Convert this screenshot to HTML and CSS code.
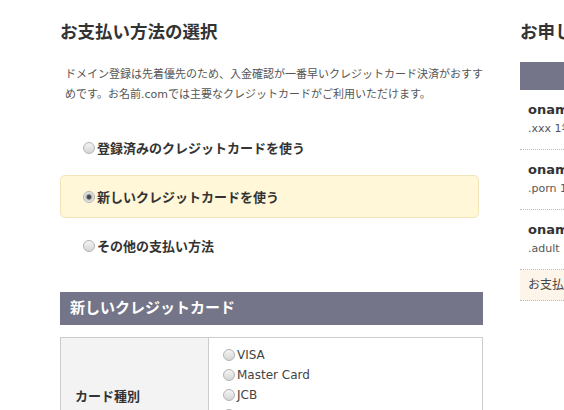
FILE: index.html
```html
<!DOCTYPE html>
<html lang="ja">
<head>
    <meta charset="UTF-8">
    <meta name="viewport" content="width=device-width, initial-scale=1.0">
    <title>お支払い方法の選択</title>
    <link rel="stylesheet" href="styles.css">
</head>
<body>

<div class="page">
    <div class="main">
        <h2 class="title">お支払い方法の選択</h2>
        <p class="lead">ドメイン登録は先着優先のため、入金確認が一番早いクレジットカード決済がおすすめです。お名前.comでは主要なクレジットカードがご利用いただけます。</p>

        <div class="methods">
            <label class="method"><input type="radio" name="pay">登録済みのクレジットカードを使う</label>
            <label class="method selected"><input type="radio" name="pay" checked>新しいクレジットカードを使う</label>
            <label class="method"><input type="radio" name="pay">その他の支払い方法</label>
        </div>

        <h3 class="section-head">新しいクレジットカード</h3>
        <table class="form-table">
            <tr>
                <th>カード種別</th>
                <td>
                    <label class="brand"><input type="radio" name="brand">VISA</label>
                    <label class="brand"><input type="radio" name="brand">Master Card</label>
                    <label class="brand"><input type="radio" name="brand">JCB</label>
                    <label class="brand"><input type="radio" name="brand">AMEX</label>
                    <label class="brand"><input type="radio" name="brand">Diners Club</label>
                </td>
            </tr>
        </table>
    </div>

    <div class="side">
        <h2 class="title">お申し込み内容</h2>
        <div class="side-bar"></div>
        <div class="item">
            <div class="item-name">onamae-sample.xxx</div>
            <div class="item-sub">.xxx 1年登録</div>
        </div>
        <div class="item">
            <div class="item-name">onamae-sample.porn</div>
            <div class="item-sub">.porn 1年登録</div>
        </div>
        <div class="item">
            <div class="item-name">onamae-sample.adult</div>
            <div class="item-sub">.adult 1年登録</div>
        </div>
        <div class="pay-row">お支払い金額</div>
    </div>
</div>

</body>
</html>
```

FILE: styles.css
```css
* {
    box-sizing: border-box;
}

body {
    margin: 0;
    background: #fff;
    color: #333;
    font-family: "DejaVu Sans", "Noto Sans CJK JP", sans-serif;
    overflow: hidden;
}

.page {
    display: flex;
    gap: 37px;
    padding: 20px 0 0 60px;
}

.main {
    flex: 0 0 423px;
    width: 423px;
    min-width: 0;
}

.side {
    flex: 0 0 260px;
    min-width: 0;
}

.title {
    margin: 0;
    font-size: 17.5px;
    line-height: 24px;
    font-weight: bold;
    color: #333;
}

.lead {
    margin: 21px 0 0;
    padding-left: 5px;
    font-size: 11px;
    line-height: 20px;
    color: #555;
}

.methods {
    margin-top: 21px;
    display: flex;
    flex-direction: column;
    gap: 6px;
}

.method {
    display: flex;
    align-items: center;
    height: 43px;
    width: 419px;
    padding-left: 22px;
    border: 1px solid transparent;
    border-radius: 5px;
    font-size: 13px;
    font-weight: bold;
    color: #333;
}

.method.selected {
    background: #fff7d8;
    border-color: #f2e4b6;
}

input[type="radio"] {
    appearance: none;
    -webkit-appearance: none;
    width: 12px;
    height: 12px;
    margin: 0 2px 0 0;
    border: 1px solid #b4b4b4;
    border-radius: 50%;
    background: linear-gradient(#f4f4f4, #d6d6d6);
    flex: none;
}

input[type="radio"]:checked {
    background: radial-gradient(circle, #3a3a3a 0, #555 2px, #c8c8c8 3px, #ececec 5px);
}

.section-head {
    margin: 25px 0 0;
    height: 33px;
    padding-left: 10px;
    background: #757589;
    color: #fff;
    font-size: 15px;
    line-height: 33px;
    font-weight: bold;
}

.form-table {
    margin-top: 12px;
    width: 423px;
    border-collapse: collapse;
}

.form-table th,
.form-table td {
    border: 1px solid #ccc;
}

.form-table th {
    width: 148px;
    padding: 0 0 0 14px;
    background: #f3f3f3;
    text-align: left;
    font-size: 13px;
    font-weight: bold;
    color: #333;
}

.form-table td {
    padding: 7px 14px;
}

.brand {
    display: flex;
    align-items: center;
    height: 20px;
    font-size: 12px;
    color: #444;
}

.side-bar {
    margin-top: 18px;
    height: 28px;
    background: #757589;
}

.item {
    padding: 10px 8px 11px;
    border-bottom: 1px dotted #bbb;
}

.item-name {
    font-size: 13px;
    line-height: 20px;
    font-weight: bold;
    color: #333;
    white-space: nowrap;
}

.item-sub {
    font-size: 11px;
    line-height: 18px;
    color: #555;
    white-space: nowrap;
}

.pay-row {
    height: 31px;
    padding-left: 8px;
    background: #fdf5ea;
    border-bottom: 1px dotted #bbb;
    font-size: 12px;
    line-height: 30px;
    color: #444;
}
```
